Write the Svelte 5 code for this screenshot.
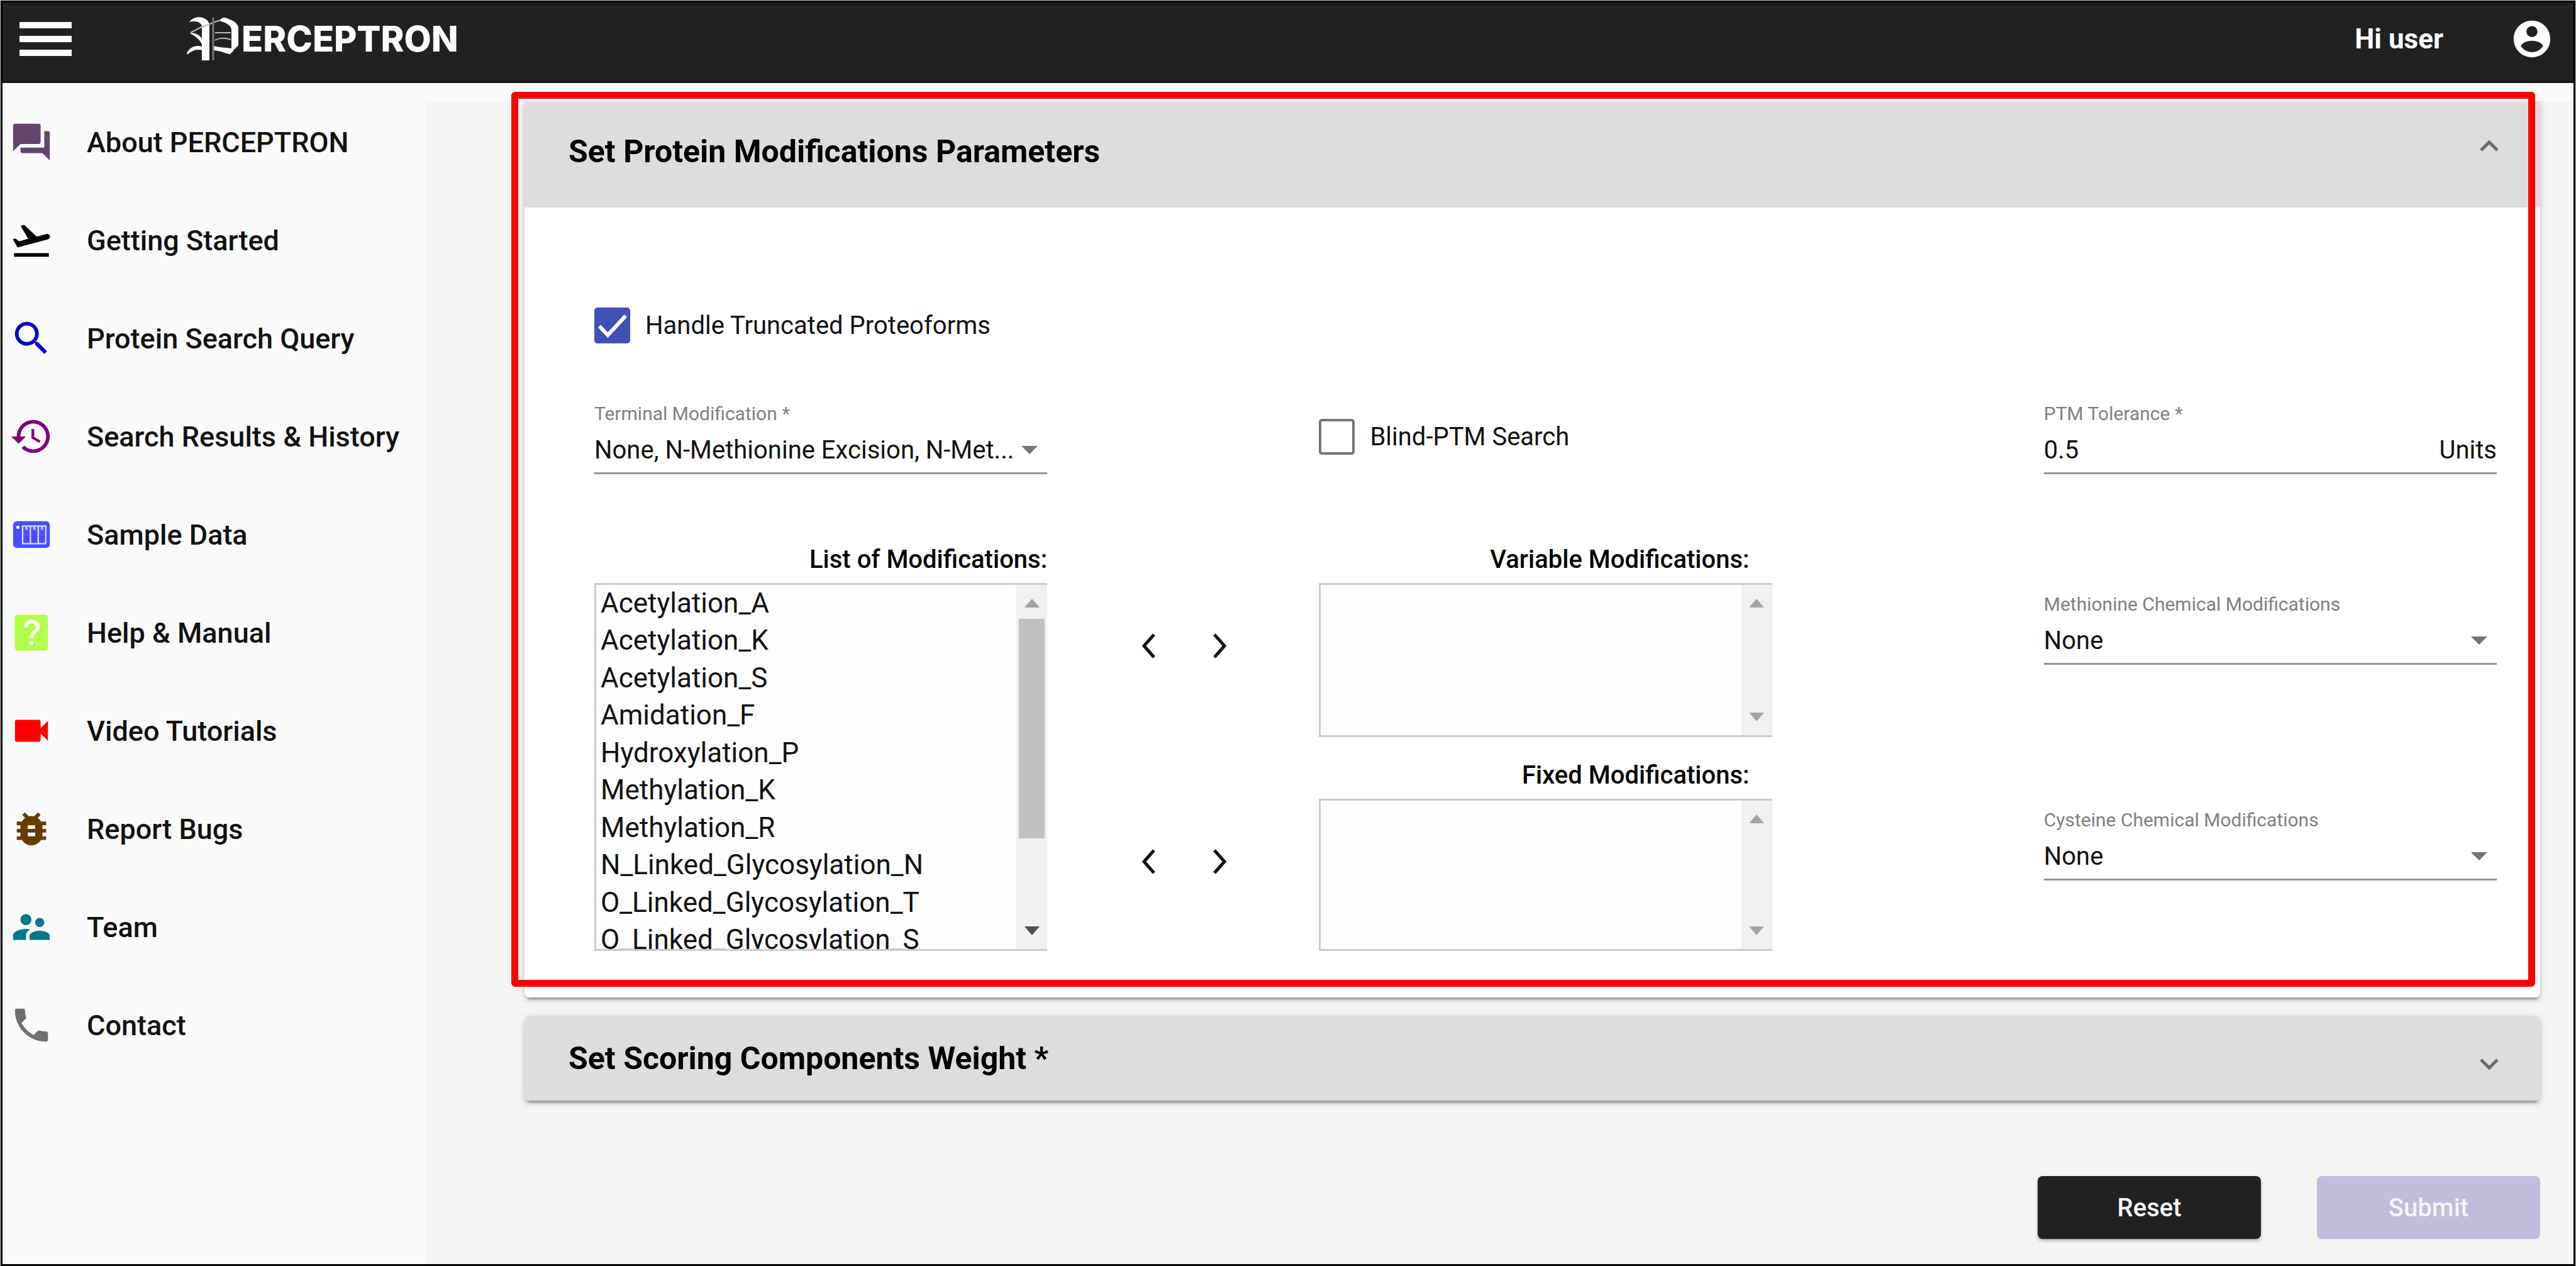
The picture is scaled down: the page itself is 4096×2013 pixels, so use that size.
<script>
  const nav = [
    { label: 'About PERCEPTRON', color: '#65456f', d: 'M21 6h-2v9H6v2c0 .55.45 1 1 1h11l4 4V7c0-.55-.45-1-1-1zm-4 6V3c0-.55-.45-1-1-1H3c-.55 0-1 .45-1 1v14l4-4h10c.55 0 1-.45 1-1z' },
    { label: 'Getting Started', color: '#000000', d: 'M2.5 19h19v2h-19zm19.57-9.36c-.21-.8-1.04-1.28-1.84-1.06L14.92 10l-6.9-6.43-1.93.51 4.14 7.17-4.97 1.33-1.97-1.54-1.45.39 1.82 3.16.77 1.33 1.6-.43 5.31-1.42 4.35-1.16L21 11.49c.81-.23 1.28-1.05 1.07-1.85z' },
    { label: 'Protein Search Query', color: '#0000cc', d: 'M15.5 14h-.79l-.28-.27C15.41 12.59 16 11.11 16 9.5 16 5.91 13.09 3 9.5 3S3 5.91 3 9.5 5.91 16 9.5 16c1.61 0 3.09-.59 4.23-1.57l.27.28v.79l5 4.99L20.49 19l-4.99-5zm-6 0C7.01 14 5 11.99 5 9.5S7.01 5 9.5 5 14 7.01 14 9.5 11.99 14 9.5 14z' },
    { label: 'Search Results & History', color: '#800080', d: 'M13 3c-4.97 0-9 4.03-9 9H1l3.89 3.89.07.14L9 12H6c0-3.87 3.13-7 7-7s7 3.13 7 7-3.13 7-7 7c-1.93 0-3.68-.79-4.94-2.06l-1.42 1.42C8.27 19.99 10.51 21 13 21c4.97 0 9-4.03 9-9s-4.03-9-9-9zm-1 5v5l4.28 2.54.72-1.21-3.5-2.08V8H12z' },
    { label: 'Sample Data', color: '#4c4cff', d: '' },
    { label: 'Help & Manual', color: '#b2ff4c', d: '' },
    { label: 'Video Tutorials', color: '#ff0000', d: 'M17 10.5V7c0-.55-.45-1-1-1H4c-.55 0-1 .45-1 1v10c0 .55.45 1 1 1h12c.55 0 1-.45 1-1v-3.500l4 4v-11l-4 4z' },
    { label: 'Report Bugs', color: '#663d00', d: 'M20 8h-2.810c-.45-.78-1.070-1.450-1.820-1.960L17 4.410 15.590 3l-2.170 2.170C12.960 5.060 12.490 5 12 5c-.49 0-.96.06-1.410.17L8.410 3 7 4.410l1.620 1.630C7.880 6.550 7.260 7.220 6.810 8H4v2h2.090c-.05.33-.09.66-.09 1v1H4v2h2v1c0 .34.04.67.09 1H4v2h2.810c1.040 1.790 2.970 3 5.190 3s4.150-1.210 5.190-3H20v-2h-2.090c.05-.33.09-.66.09-1v-1h2v-2h-2v-1c0-.34-.04-.67-.09-1H20V8zm-6 8h-4v-2h4v2zm0-4h-4v-2h4v2z' },
    { label: 'Team', color: '#00798c', d: 'M16.500 12c1.380 0 2.490-1.120 2.490-2.500S17.880 7 16.500 7C15.120 7 14 8.120 14 9.500s1.120 2.500 2.500 2.500zM9 11c1.660 0 2.990-1.340 2.990-3S10.660 5 9 5C7.340 5 6 6.340 6 8s1.340 3 3 3zm7.500 3c-1.830 0-5.500.92-5.500 2.750V19h11v-2.250c0-1.830-3.670-2.750-5.500-2.750zM9 13c-2.330 0-7 1.170-7 3.500V19h7v-2.250c0-.85.33-2.340 2.370-3.470C10.500 13.100 9.660 13 9 13z' },
    { label: 'Contact', color: '#6f6f6f', d: 'M6.620 10.790c1.440 2.830 3.760 5.140 6.590 6.590l2.200-2.200c.27-.27.67-.36 1.020-.24 1.120.37 2.330.57 3.570.57.55 0 1 .45 1 1V20c0 .55-.45 1-1 1-9.390 0-17-7.610-17-17 0-.55.45-1 1-1h3.500c.55 0 1 .45 1 1 0 1.250.2 2.450.57 3.570.11.35.03.74-.25 1.020l-2.200 2.200z' }
  ];

  const modifications = [
    'Acetylation_A', 'Acetylation_K', 'Acetylation_S', 'Amidation_F', 'Hydroxylation_P',
    'Methylation_K', 'Methylation_R', 'N_Linked_Glycosylation_N', 'O_Linked_Glycosylation_T',
    'O_Linked_Glycosylation_S'
  ];

  let truncated = $state(true);
  let blind = $state(false);
  let tolerance = $state('0.5');
</script>

{#snippet scrollbar(full)}
  <div class="scrollbar" class:full aria-hidden="true">
    <svg class="tri" viewBox="0 0 24 14"><path d="M12 0 24 14H0z" /></svg>
    <div class="track">{#if full}<div class="thumb"></div>{/if}</div>
    <svg class="tri down" viewBox="0 0 24 14"><path d="M0 0h24L12 14z" /></svg>
  </div>
{/snippet}

{#snippet movers(name)}
  <div class="movers">
    <button type="button" aria-label="Remove from {name}">
      <svg viewBox="0 0 24 40"><path d="M21 2 5 20l16 18" /></svg>
    </button>
    <button type="button" aria-label="Add to {name}">
      <svg viewBox="0 0 24 40"><path d="M3 2l16 18L3 38" /></svg>
    </button>
  </div>
{/snippet}

{#snippet dropdown(id, label, value)}
  <div class="field">
    <label for={id}>{label}</label>
    <div class="control">
      <select {id}><option>{value}</option></select>
      <svg class="caret" viewBox="0 0 26 13" aria-hidden="true"><path d="M0 0h26L13 13z" /></svg>
    </div>
  </div>
{/snippet}

<div class="app">
  <header class="topbar">
    <button class="menu" type="button" aria-label="Menu"><span></span><span></span><span></span></button>
    <a class="logo" href="#home" aria-label="PERCEPTRON">
      <svg viewBox="0 0 82 72" aria-hidden="true">
        <g fill="#fff">
          <path d="M4 9C10 0 24-1 31 5c3 2 5 6 5 10v55H24V16c0-6-10-10-20-7z" />
          <path d="M5 27c8-2 14 2 19 8v9c-4-7-9-12-19-17z" />
          <path d="M0 58C6 48 14 45 25 48v6C14 51 8 55 1 61z" />
          <path d="M52 7c3-6 9-6 14-3 8 3 14 6 16 13v29L70 58c1-4 1-7 1-12V22c0-8-9-12-19-15z" />
          <path d="M43 47c10 3 17 2 28 4l3 4-5 5c-9-1-14-5-26-6z" />
        </g>
        <g fill="none" stroke="#bbb" stroke-width="2">
          <path d="M6 26 21 18 53 6M45 26h25M45 38c6-4 17-4 25-1" />
          <path stroke="#777" stroke-width="3" d="M42 2v68" />
        </g>
      </svg>
      <span>ERCEPTRON</span>
    </a>
    <span class="greeting">Hi user</span>
    <button class="account" type="button" aria-label="Account">
      <svg viewBox="0 0 24 24"><path fill="#fff" d="M12 2C6.480 2 2 6.480 2 12s4.480 10 10 10 10-4.480 10-10S17.520 2 12 2zm0 3c1.660 0 3 1.340 3 3s-1.340 3-3 3-3-1.340-3-3 1.340-3 3-3zm0 14.200c-2.500 0-4.710-1.280-6-3.220.03-1.990 4-3.080 6-3.080 1.990 0 5.970 1.090 6 3.080-1.290 1.940-3.500 3.220-6 3.220z" /></svg>
    </button>
  </header>

  <div class="shell">
    <nav class="sidebar">
      {#each nav as item (item.label)}
        <a href="#{item.label.toLowerCase().replaceAll(' ', '-')}">
          <svg viewBox="0 0 24 24" fill={item.color} aria-hidden="true">
            {#if item.label === 'Sample Data'}
              <rect x="2" y="4.700" width="20" height="14.600" rx="2" />
              <circle cx="4.600" cy="8" r=".9" fill="#fff" />
              <path fill="none" stroke="#dcdcff" stroke-width=".8" d="M7.200 7.300h12.600v9.600H7.200zM11.400 7.300v9.600M15.700 7.300v9.600" />
              <path fill="#b4b4ff" d="M8.600 7.500h1.400v2H8.600zM12.900 7.500h1.400v2h-1.400zM17.100 7.500h1.400v2h-1.400z" />
            {:else if item.label === 'Help & Manual'}
              <rect x="3" y="2.200" width="18" height="19.600" rx="1.500" />
              <path fill="none" stroke="#fff" stroke-width="2" d="M9 9.200c0-4.600 6.400-4.300 6.400-.4 0 2.600-3.400 2.700-3.400 6.200" />
              <rect x="11" y="16.800" width="2" height="2" fill="#fff" />
            {:else}
              <path d={item.d} />
            {/if}
          </svg>
          <span>{item.label}</span>
        </a>
      {/each}
    </nav>

    <main>
      <form class="page" onsubmit={(e) => e.preventDefault()}>
        <section class="panel open">
          <h2>
            <button class="bar" type="button" aria-expanded="true">
              <span>Set Protein Modifications Parameters</span>
              <svg class="chevron" viewBox="0 0 36 44" aria-hidden="true"><path d="M5 24l13 13 13-13" /></svg>
            </button>
          </h2>
          <div class="body">
            <label class="check">
              <input type="checkbox" bind:checked={truncated} />
              <span>Handle Truncated Proteoforms</span>
            </label>

            <div class="row">
              {@render dropdown('terminal', 'Terminal Modification *', 'None, N-Methionine Excision, N-Met...')}
              <label class="check blind">
                <input type="checkbox" bind:checked={blind} />
                <span>Blind-PTM Search</span>
              </label>
              <div class="field last">
                <label for="tolerance">PTM Tolerance *</label>
                <div class="control">
                  <input id="tolerance" type="text" bind:value={tolerance} />
                  <span>Units</span>
                </div>
              </div>
            </div>

            <div class="row lists">
              <div class="list source">
                <label for="all-mods">List of Modifications:</label>
                <div class="box">
                  <select id="all-mods" multiple>
                    {#each modifications as m (m)}<option>{m}</option>{/each}
                  </select>
                  {@render scrollbar(true)}
                </div>
              </div>
              {@render movers('variable modifications')}
              <div class="list">
                <label class="inset" for="variable-mods">Variable Modifications:</label>
                <div class="box">
                  <select id="variable-mods" multiple></select>
                  {@render scrollbar(false)}
                </div>
              </div>
              <div class="last lower">{@render dropdown('methionine', 'Methionine Chemical Modifications', 'None')}</div>
              {@render movers('fixed modifications')}
              <div class="list">
                <label class="inset" for="fixed-mods">Fixed Modifications:</label>
                <div class="box">
                  <select id="fixed-mods" multiple></select>
                  {@render scrollbar(false)}
                </div>
              </div>
              <div class="last lower">{@render dropdown('cysteine', 'Cysteine Chemical Modifications', 'None')}</div>
            </div>
          </div>
          <div class="highlight" aria-hidden="true"></div>
        </section>

        <section class="panel">
          <h2>
            <button class="bar" type="button" aria-expanded="false">
              <span>Set Scoring Components Weight *</span>
              <svg class="chevron" viewBox="0 0 36 44" aria-hidden="true"><path d="M5 24l13 13 13-13" /></svg>
            </button>
          </h2>
        </section>

        <div class="actions">
          <button class="reset" type="reset">Reset</button>
          <button class="submit" type="submit" disabled>Submit</button>
        </div>
      </form>
    </main>
  </div>
</div>

<style>
  :global(body) {
    margin: 0;
    background: #d0d0d0;
  }

  .app {
    box-sizing: border-box;
    min-height: calc(100vh - 2px);
    margin: 1px;
    border: 3px solid #000;
    background: #fafafa;
    color: #111;
    font-family: Roboto, "Liberation Sans", sans-serif;
    font-size: 40px;
    display: flex;
    flex-direction: column;
  }

  .app :global(*) {
    box-sizing: border-box;
  }

  button,
  input,
  select {
    font: inherit;
    color: inherit;
    margin: 0;
    padding: 0;
    border: 0;
    background: none;
    border-radius: 0;
    appearance: none;
    outline: none;
  }

  svg {
    display: block;
    flex: none;
  }

  .topbar {
    display: flex;
    align-items: center;
    height: 128px;
    padding: 0 31px 9px 27px;
    border-bottom: 3px solid #111;
    background: #212121;
    color: #fff;
  }

  .menu {
    display: flex;
    flex-direction: column;
    gap: 12px;
    width: 83px;
  }

  .menu span {
    height: 10px;
    background: #fff;
  }

  .logo {
    display: flex;
    align-items: center;
    gap: 5px;
    margin-left: 183px;
    color: #fff;
    font-family: Inter, Lato, sans-serif;
    font-size: 56px;
    font-weight: 800;
    line-height: 72px;
    text-decoration: none;
  }

  .logo svg {
    width: 82px;
    height: 72px;
  }

  .greeting {
    margin-left: auto;
    font-size: 44px;
    font-weight: 700;
  }

  .account {
    margin-left: 106px;
  }

  .account svg {
    width: 70px;
    height: 70px;
  }

  .shell {
    display: flex;
    flex: 1;
  }

  .sidebar {
    flex: none;
    width: 674px;
    padding-top: 16px;
  }

  .sidebar a {
    display: flex;
    align-items: center;
    gap: 53px;
    height: 156px;
    padding-left: 11px;
    color: #111;
    font-size: 45px;
    font-weight: 500;
    text-decoration: none;
  }

  .sidebar svg {
    width: 70px;
    height: 70px;
  }

  main {
    flex: 1;
    min-width: 0;
    margin-top: 29px;
    background: #f4f4f4;
  }

  .page {
    display: flex;
    flex-direction: column;
    gap: 29px;
    padding: 0 53px 40px 156px;
  }

  .panel {
    position: relative;
    border-radius: 8px;
    background: #fff;
    box-shadow: 0 8px 3px -5px rgba(0, 0, 0, 0.2), 0 5px 5px rgba(0, 0, 0, 0.14), 0 3px 13px rgba(0, 0, 0, 0.12);
  }

  .panel.open {
    border-top-left-radius: 0;
    border-top-right-radius: 0;
  }

  h2 {
    margin: 0;
    font-size: 50px;
    font-weight: 700;
  }

  .bar {
    display: flex;
    align-items: center;
    justify-content: space-between;
    width: 100%;
    height: 135px;
    padding: 0 63px 0 70px;
    border-radius: 8px;
    background: #ddd;
    color: #000;
    text-align: left;
  }

  .open .bar {
    height: 169px;
    padding-bottom: 9px;
    border-radius: 0;
  }

  .chevron {
    width: 36px;
    height: 44px;
    fill: none;
    stroke: #6b6b6b;
    stroke-width: 5;
  }

  .open .chevron {
    transform: rotate(180deg);
  }

  .body {
    padding: 159px 69px 74px 111px;
  }

  .highlight {
    position: absolute;
    inset: -15px 8px 17px -21px;
    border: 11px solid #f00;
    border-radius: 6px;
    pointer-events: none;
  }

  .check {
    display: flex;
    align-items: center;
    gap: 24px;
    width: max-content;
  }

  .check input {
    width: 57px;
    height: 57px;
    border: 4px solid #757575;
    border-radius: 5px;
    background: center / contain no-repeat;
  }

  .check input:checked {
    border-color: #3f51b5;
    background-color: #3f51b5;
    background-image: url("data:image/svg+xml,%3Csvg xmlns='http://www.w3.org/2000/svg' viewBox='0 0 48 48'%3E%3Cpath d='M4 25l13 14L45 9' fill='none' stroke='white' stroke-width='6'/%3E%3C/svg%3E");
  }

  .row {
    display: grid;
    grid-template-columns: 5fr 3fr 5fr 3fr 5fr;
    margin-top: 88px;
  }

  .blind {
    grid-column: 3;
  }

  .last {
    grid-column: 5;
  }

  .field > label {
    display: block;
    color: #808080;
    font-size: 30px;
    line-height: 48px;
  }

  .control {
    display: flex;
    align-items: center;
    height: 72px;
    padding-bottom: 2px;
    border-bottom: 3px solid #949494;
  }

  .control input,
  .control select {
    flex: 1;
    min-width: 0;
    height: 60px;
  }

  .caret {
    width: 26px;
    height: 13px;
    margin-right: 15px;
    fill: #757575;
  }

  .lists {
    grid-template-rows: 306px 303px;
    row-gap: 37px;
    margin-top: 112px;
  }

  .list {
    display: flex;
    flex-direction: column;
    gap: 13px;
    min-height: 0;
  }

  .source {
    grid-row: span 2;
  }

  .list > label {
    color: #000;
    font-weight: 500;
    line-height: 48px;
    text-align: right;
  }

  .list > .inset {
    padding-right: 36px;
  }

  .box {
    display: flex;
    flex: 1;
    min-height: 0;
    border: 3px solid #ccc;
    border-right: 0;
    background: #fdfdfd;
  }

  .box select {
    flex: 1;
    min-width: 0;
    height: 100%;
    padding-top: 3px;
    overflow: hidden;
    font-size: 44px;
  }

  .box option {
    height: 59px;
    min-height: 0;
    padding: 0 7px;
    line-height: 59px;
  }

  .box option:nth-child(even) {
    height: 60px;
  }

  .scrollbar {
    display: flex;
    flex-direction: column;
    align-items: center;
    width: 49px;
    padding: 22px 0;
    background: #f0f0f0;
  }

  .tri {
    width: 24px;
    height: 14px;
    fill: #a3a3a3;
  }

  .full .down {
    fill: #505050;
  }

  .track {
    flex: 1;
    width: 41px;
    padding: 18px 0;
  }

  .thumb {
    height: 74%;
    background: #c1c1c1;
  }

  .movers {
    grid-column: 2;
    display: flex;
    justify-content: center;
    padding: 121px 0 0 4px;
  }

  .movers button {
    display: flex;
    align-items: center;
    justify-content: center;
    width: 114px;
    height: 80px;
  }

  .movers svg {
    width: 24px;
    height: 40px;
    fill: none;
    stroke: #111;
    stroke-width: 5;
  }

  .lower {
    padding-top: 71px;
  }

  .actions {
    display: flex;
    justify-content: flex-end;
    gap: 89px;
    margin-top: 91px;
  }

  .actions button {
    width: 355px;
    height: 100px;
    border-radius: 8px;
    font-weight: 500;
  }

  .reset {
    background: #212121;
    color: #fff;
    box-shadow: 0 3px 5px rgba(0, 0, 0, 0.3);
  }

  .submit {
    background: #bfbcdc;
    color: #f4f4fa;
  }
</style>
